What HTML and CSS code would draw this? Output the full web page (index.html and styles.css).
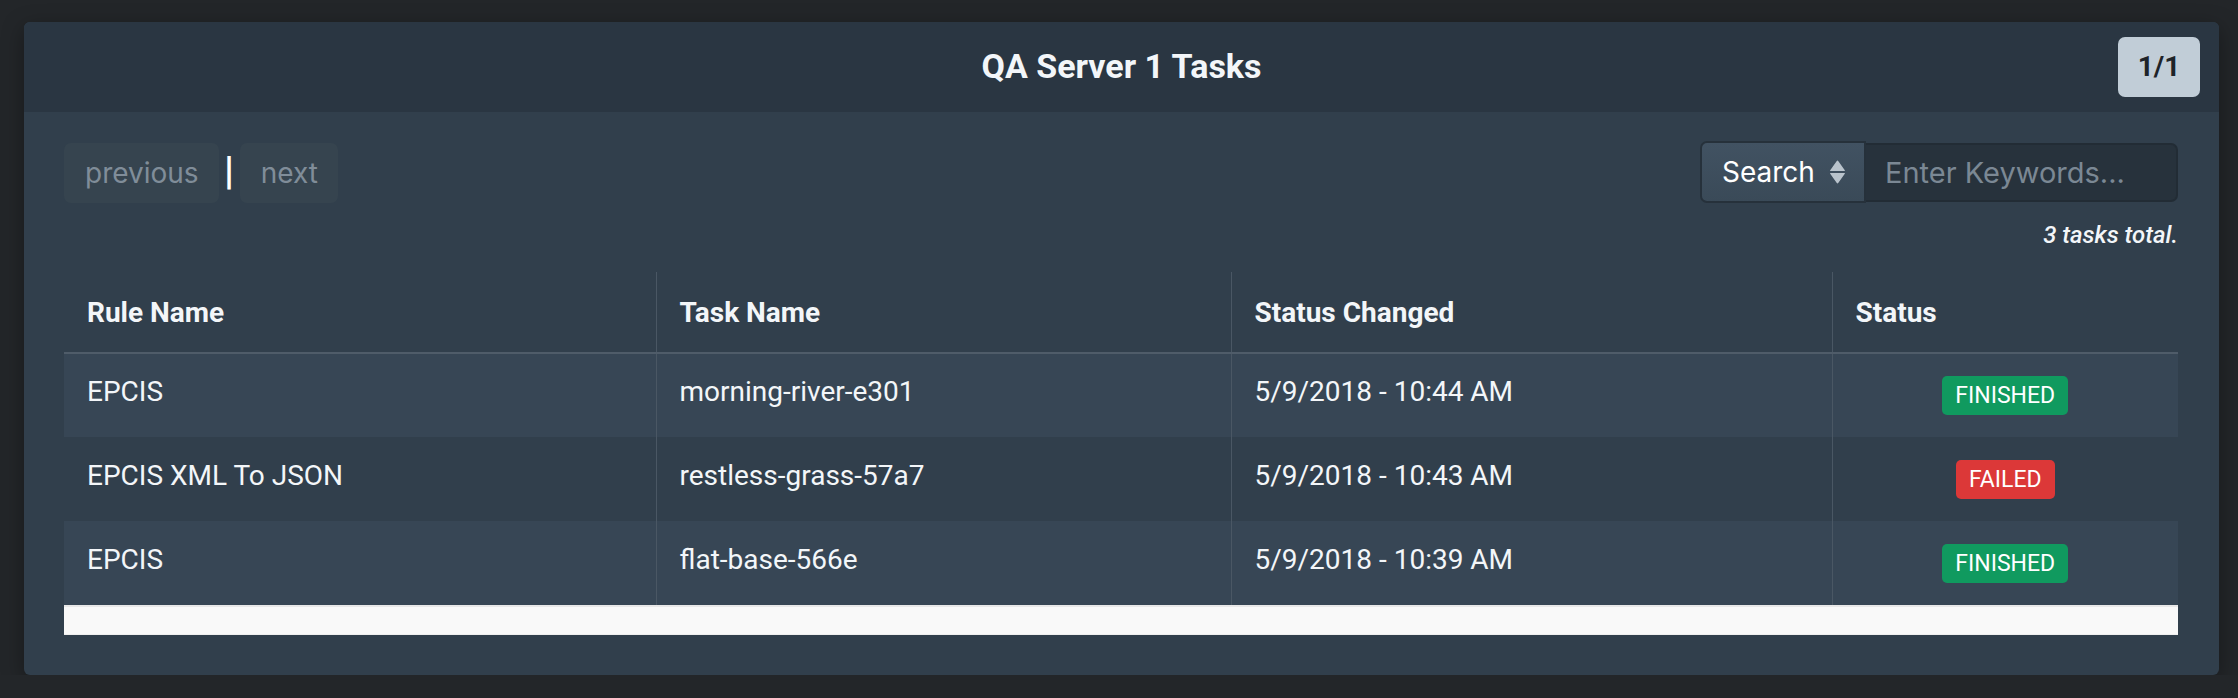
FILE: index.html
```html
<!DOCTYPE html>
<html lang="en">
<head>
  <meta charset="UTF-8" />
  <meta name="viewport" content="width=device-width, initial-scale=1.0"/>
  <title>QA Server 1 Tasks</title>
  <link rel="stylesheet" href="styles.css">
</head>
<body>
  <div class="panel">
    <!-- Header -->
    <header class="panel-head">
      <h1 class="panel-title">QA Server 1 Tasks</h1>
      <span class="page-count">1/1</span>
    </header>

    <div class="panel-body">
      <!-- Pager + search -->
      <div class="toolbar">
        <div class="pager">
          <button class="pager-btn" disabled>previous</button>
          <span class="pager-sep">|</span>
          <button class="pager-btn" disabled>next</button>
        </div>
        <div class="search">
          <div class="search-select">
            Search
            <svg class="select-arrows" width="17" height="24" viewBox="0 0 17 24">
              <path d="M1.2 10.2 L7.6 1.2 Q8.5 0 9.4 1.2 L15.8 10.2 Q16.4 11 15.4 11 H1.6 Q0.6 11 1.2 10.2 Z" fill="#b9c3cc"/>
              <path d="M1.2 13.8 L7.6 22.8 Q8.5 24 9.4 22.8 L15.8 13.8 Q16.4 13 15.4 13 H1.6 Q0.6 13 1.2 13.8 Z" fill="#b9c3cc"/>
            </svg>
          </div>
          <input class="search-input" type="text" placeholder="Enter Keywords...">
        </div>
      </div>

      <p class="total">3 tasks total.</p>

      <!-- Task table -->
      <table class="tasks">
        <thead>
          <tr>
            <th class="col-rule">Rule Name</th>
            <th class="col-task">Task Name</th>
            <th class="col-changed">Status Changed</th>
            <th class="col-status">Status</th>
          </tr>
        </thead>
        <tbody>
          <tr>
            <td>EPCIS</td>
            <td>morning-river-e301</td>
            <td>5/9/2018 - 10:44 AM</td>
            <td class="status-cell"><span class="badge finished">FINISHED</span></td>
          </tr>
          <tr>
            <td>EPCIS XML To JSON</td>
            <td>restless-grass-57a7</td>
            <td>5/9/2018 - 10:43 AM</td>
            <td class="status-cell"><span class="badge failed">FAILED</span></td>
          </tr>
          <tr>
            <td>EPCIS</td>
            <td>flat-base-566e</td>
            <td>5/9/2018 - 10:39 AM</td>
            <td class="status-cell"><span class="badge finished">FINISHED</span></td>
          </tr>
        </tbody>
      </table>
      <div class="scroll-track"></div>
    </div>
  </div>
</body>
</html>
```

FILE: styles.css
```css
/* Basic Reset */
* {
  margin: 0;
  padding: 0;
  box-sizing: border-box;
}

body {
  background: #232629;
  color: #f3f6f9;
  font-family: 'Roboto', 'Liberation Sans', sans-serif;
  font-size: 28px;
  padding: 22px 19px 0 24px;
}

/* Panel */
.panel {
  background: #313f4c;
  border-radius: 6px;
  box-shadow: 0 6px 22px rgba(0, 0, 0, 0.35);
  overflow: hidden;
}

.panel-head {
  background: #2a3642;
  height: 90px;
  display: grid;
  grid-template-columns: 1fr auto 1fr;
  align-items: center;
  padding: 0 19px;
}

.panel-title {
  grid-column: 2;
  font-size: 34px;
  font-weight: 700;
  color: #f3f6f9;
  padding-bottom: 2px;
}

.page-count {
  grid-column: 3;
  justify-self: end;
  background: #c1cdd7;
  color: #1e2328;
  font-weight: 700;
  font-size: 28px;
  height: 60px;
  line-height: 60px;
  width: 82px;
  text-align: center;
  border-radius: 7px;
}

.panel-body {
  padding: 29px 41px 40px 40px;
}

/* Toolbar */
.toolbar {
  display: flex;
  justify-content: space-between;
  align-items: center;
}

.pager {
  display: flex;
  align-items: center;
  padding-top: 1px;
}

.pager-btn {
  font-family: 'Inter', 'Roboto', sans-serif;
  font-size: 28px;
  color: #808d99;
  background: #36444f;
  border: none;
  border-radius: 7px;
  height: 60px;
  padding: 0 20px 0 21px;
}

.pager-sep {
  width: 21px;
  text-align: center;
  color: #fff;
  font-family: 'Inter', sans-serif;
  font-size: 28px;
  font-weight: 600;
}

.search {
  display: flex;
  align-items: center;
}

.search-select {
  display: flex;
  align-items: center;
  gap: 14px;
  height: 62px;
  width: 166px;
  padding-left: 20px;
  font-family: 'Inter', 'Roboto', sans-serif;
  font-size: 28px;
  color: #fff;
  background: linear-gradient(#415262, #3a4a58);
  border: 2px solid #26313b;
  border-radius: 7px 0 0 7px;
}

.search-input {
  width: 312px;
  height: 59px;
  padding-left: 19px;
  font-family: 'Inter', 'Roboto', sans-serif;
  font-size: 29px;
  color: #fff;
  background: #27323c;
  border: 2px solid #222c35;
  border-left: none;
  border-radius: 0 7px 7px 0;
  outline: none;
}

.search-input::placeholder {
  color: #7b8894;
}

.total {
  text-align: right;
  font-size: 24px;
  font-style: italic;
  font-weight: 500;
  line-height: 34px;
  margin: 15px 0 20px;
}

/* Table */
.tasks {
  width: 100%;
  border-collapse: collapse;
  table-layout: fixed;
}

.col-rule { width: 592px; }
.col-task { width: 575px; }
.col-changed { width: 601px; }

.tasks th {
  text-align: left;
  font-weight: 700;
  height: 81px;
  padding: 0 23px;
  border-bottom: 2px solid #4f5c69;
  vertical-align: middle;
}

.tasks td {
  height: 84px;
  padding: 0 23px 8px;
  vertical-align: middle;
  white-space: nowrap;
}

.tasks th + th,
.tasks td + td {
  border-left: 1px solid #4a5764;
}

.tasks tbody tr:nth-child(odd) {
  background: #374655;
}

.status-cell {
  text-align: center;
}

.tasks td.status-cell {
  padding-bottom: 0;
}

.badge {
  display: inline-block;
  font-size: 23px;
  font-weight: 400;
  color: #fff;
  height: 39px;
  line-height: 39px;
  padding: 0 13px;
  border-radius: 5px;
}

.badge.finished {
  background: #109a5f;
}

.badge.failed {
  background: #dc3838;
}

/* Horizontal scroll track under the table */
.scroll-track {
  height: 30px;
  background: #f9f9f9;
  border-top: 2px solid #e8e8e8;
  border-bottom: 1px solid #efefef;
}
```
